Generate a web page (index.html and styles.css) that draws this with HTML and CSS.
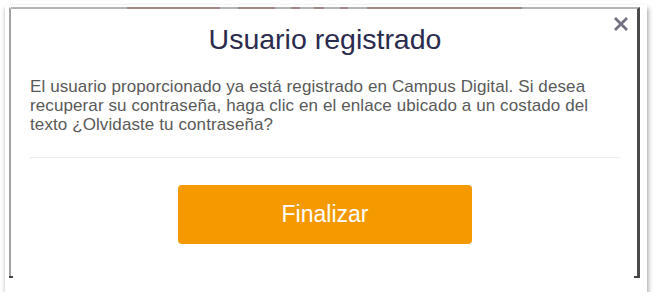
FILE: index.html
```html
<!DOCTYPE html>
<html lang="es">
<head>
    <meta charset="UTF-8">
    <meta name="viewport" content="width=device-width, initial-scale=1.0">
    <title>Usuario registrado</title>
    <link rel="stylesheet" href="styles.css">
</head>
<body>
    <div class="frame">
        <div class="dialog">
            <button class="close" aria-label="Cerrar">
                <svg viewBox="0 0 16 16" width="16" height="16">
                    <path d="M2 2 L14 14 M14 2 L2 14" stroke="#727284" stroke-width="2.8" stroke-linecap="butt" />
                </svg>
            </button>
            <h2 class="title">Usuario registrado</h2>
            <p class="message">El usuario proporcionado ya está registrado en Campus Digital. Si desea recuperar su contraseña, haga clic en el enlace ubicado a un costado del texto ¿Olvidaste tu contraseña?</p>
            <hr class="divider">
            <div class="actions">
                <button class="finish">Finalizar</button>
            </div>
        </div>
    </div>
</body>
</html>
```

FILE: styles.css
```css
body {
    margin: 0;
    background: #fff;
    font-family: "Liberation Sans", Arial, sans-serif;
}

.frame {
    margin: 5px 0 0 5px;
    width: 642px;
    height: 287px;
    background: #fff;
    box-shadow: 1px 3px 5px rgba(0, 0, 0, 0.4);
    padding: 2px 0 0 4px;
    box-sizing: border-box;
}

.dialog {
    position: relative;
    width: 631px;
    height: 270px;
    box-sizing: border-box;
    border-top: 2px solid transparent;
    border-left: 2px solid #a2a2a2;
    border-right: 3px solid #4a4a4a;
    padding: 14px 17px 0 19px;
    background:
        linear-gradient(to right,
            #b4b4b4 0, #b4b4b4 118px,
            #a08884 118px, #a08884 211px,
            #b4b4b4 211px, #b4b4b4 229px,
            #a08884 229px, #a08884 266px,
            #b4b4b4 266px, #b4b4b4 282px,
            #a08884 282px, #a08884 291px,
            #b4b4b4 291px, #b4b4b4 305px,
            #a08884 305px, #a08884 315px,
            #b4b4b4 315px, #b4b4b4 331px,
            #a08884 331px, #a08884 339px,
            #b4b4b4 339px, #b4b4b4 358px,
            #a08884 358px, #a08884 513px,
            #b4b4b4 513px) top left / 100% 2px no-repeat,
        #fff;
    background-origin: border-box;
}

/* small dark marks left at the bottom corners of the frame */
.dialog::before,
.dialog::after {
    content: "";
    position: absolute;
    bottom: -1px;
    height: 2px;
    width: 4px;
    background: #444;
}

.dialog::before {
    left: -2px;
}

.dialog::after {
    right: -3px;
    width: 6px;
}

.close {
    position: absolute;
    top: 7px;
    right: 8px;
    width: 16px;
    height: 16px;
    padding: 0;
    border: none;
    background: none;
    cursor: pointer;
}

.close svg {
    display: block;
}

.title {
    margin: 0;
    text-align: center;
    font-size: 28.5px;
    line-height: 32px;
    font-weight: normal;
    color: #2b2b4e;
}

.message {
    margin: 22px 0 0;
    font-size: 17px;
    letter-spacing: 0.1px;
    line-height: 19px;
    color: #595959;
}

.divider {
    margin: 23px 0 0;
    border: none;
    border-top: 1px solid #ececec;
    height: 0;
}

.actions {
    display: flex;
    justify-content: center;
    margin-top: 27px;
}

.finish {
    width: 294px;
    height: 59px;
    border: none;
    border-radius: 4px;
    background: #f49a00;
    color: #fff;
    font-family: "Liberation Sans", Arial, sans-serif;
    font-size: 23px;
    cursor: pointer;
}
```
